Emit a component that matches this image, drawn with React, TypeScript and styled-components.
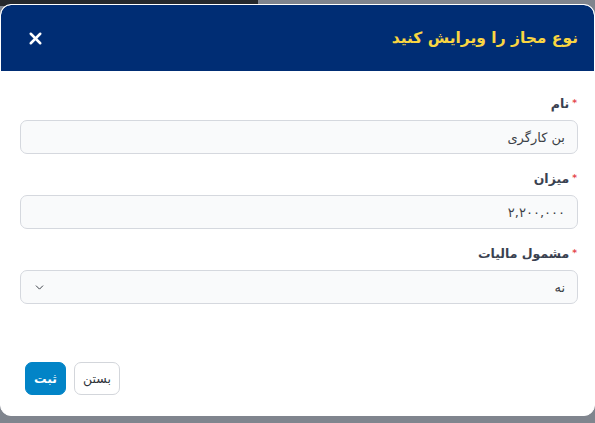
import { ReactNode } from 'react'
import styled, { createGlobalStyle } from 'styled-components'
import { X, ChevronDown } from 'lucide-react'

const GlobalStyle = createGlobalStyle`
  html, body {
    margin: 0;
    padding: 0;
  }
  body {
    font-family: 'DejaVu Sans', 'Noto Sans', sans-serif;
    background: #80858e;
  }
  * {
    box-sizing: border-box;
  }
`

const Backdrop = styled.div`
  position: relative;
  width: 595px;
  height: 423px;
  padding-top: 4px;
  background: #80858e;
  overflow: hidden;

  &::before {
    content: '';
    position: absolute;
    top: 0;
    left: 0;
    width: 258px;
    height: 6px;
    background: #25282c;
  }
`

const Modal = styled.div`
  position: relative;
  display: flex;
  flex-direction: column;
  width: 595px;
  height: 412px;
  background: #ffffff;
  border: 1px solid #ffffff;
  border-radius: 11px;
  overflow: hidden;
  direction: rtl;
`

const Header = styled.div`
  display: flex;
  align-items: center;
  justify-content: space-between;
  height: 66px;
  padding: 0 16px 0 25px;
  background: #002d74;
  border-radius: 10px 10px 0 0;
`

const Title = styled.h2`
  margin: 0;
  font-size: 15.5px;
  font-weight: 700;
  color: #f9d542;
`

const CloseButton = styled.button`
  display: flex;
  align-items: center;
  justify-content: center;
  padding: 0;
  border: 0;
  background: transparent;
  color: #ffffff;
  cursor: pointer;
`

const Body = styled.div`
  display: flex;
  flex-direction: column;
  gap: 16px;
  padding: 24px 16px 0 19px;
`

const Field = styled.div`
  display: flex;
  flex-direction: column;
  gap: 7px;
`

const Label = styled.label`
  display: flex;
  align-items: center;
  gap: 3px;
  padding-right: 1px;
  font-size: 12.5px;
  font-weight: 700;
  line-height: 18px;
  color: #3a4150;

  &::before {
    content: '*';
    font-size: 9px;
    color: #e5484d;
    align-self: flex-start;
    margin-top: -1px;
  }
`

const InputBox = styled.div`
  display: flex;
  align-items: center;
  justify-content: space-between;
  height: 34px;
  padding: 0 12px 0 12px;
  border: 1px solid #d5d8de;
  border-radius: 7px;
  background: #f9fafb;
  font-size: 13px;
  color: #3b3f46;
`

const Footer = styled.div`
  display: flex;
  flex-direction: row-reverse;
  gap: 8px;
  margin-top: auto;
  padding: 0 24px 20px;
`

const Button = styled.button<{ $primary?: boolean }>`
  height: 33px;
  padding: 0 8px;
  border-radius: 7px;
  font-family: inherit;
  font-size: 12.5px;
  font-weight: ${(p) => (p.$primary ? 700 : 400)};
  color: ${(p) => (p.$primary ? '#ffffff' : '#2f343b')};
  background: ${(p) => (p.$primary ? '#0284c7' : '#ffffff')};
  border: 1px solid ${(p) => (p.$primary ? '#0284c7' : '#d3d6db')};
  cursor: pointer;
`

interface FormFieldProps {
  $label: string
  children: ReactNode
}
const FormField = ({ $label, children }: FormFieldProps) => (
  <Field>
    <Label>{$label}</Label>
    {children}
  </Field>
)

export default function App() {
  return (
    <>
      <GlobalStyle />
      <Backdrop>
        <Modal>
          <Header>
            <Title>نوع مجاز را ویرایش کنید</Title>
            <CloseButton aria-label='close'>
              <X size={19} strokeWidth={3.2} />
            </CloseButton>
          </Header>
          <Body>
            <FormField $label='نام'>
              <InputBox>بن کارگری</InputBox>
            </FormField>
            <FormField $label='میزان'>
              <InputBox>۲,۲۰۰,۰۰۰</InputBox>
            </FormField>
            <FormField $label='مشمول مالیات'>
              <InputBox>
                <span>نه</span>
                <ChevronDown size={13} strokeWidth={1.8} color='#3b3f46' />
              </InputBox>
            </FormField>
          </Body>
          <Footer>
            <Button $primary>ثبت</Button>
            <Button>بستن</Button>
          </Footer>
        </Modal>
      </Backdrop>
    </>
  )
}
